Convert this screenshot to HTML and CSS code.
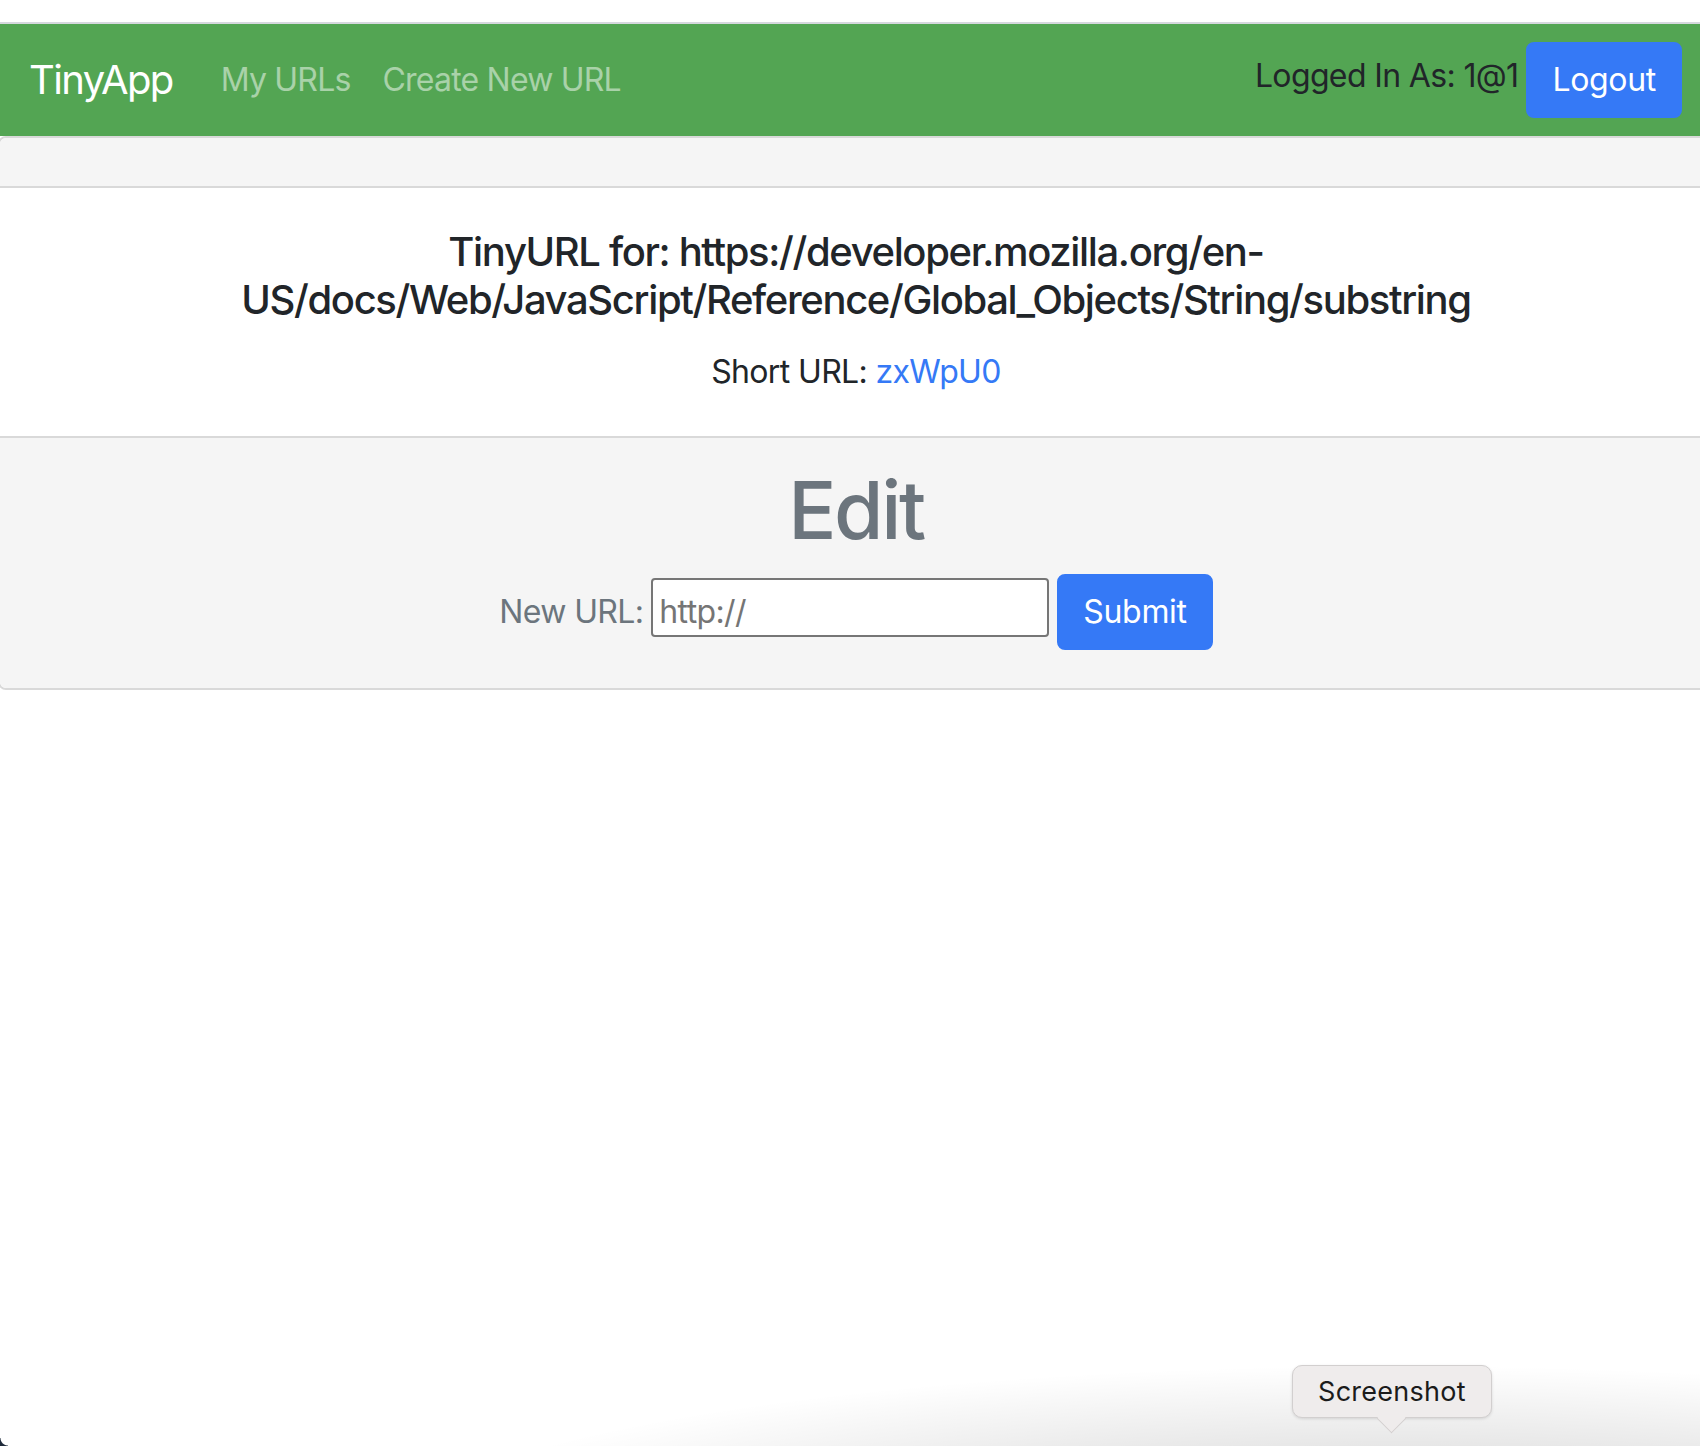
FILE: index.html
```html
<!DOCTYPE html>
<html lang="en">
<head>
<meta charset="utf-8">
<title>TinyApp</title>
<link rel="stylesheet" href="styles.css">
</head>
<body>
<div class="chrome"></div>
<div class="page">
  <nav class="navbar">
    <div class="nav-left">
      <a class="brand" href="#">TinyApp</a>
      <ul class="nav">
        <li><a class="nav-link" href="#">My URLs</a></li>
        <li><a class="nav-link" href="#">Create New URL</a></li>
      </ul>
    </div>
    <div class="nav-right">
      <span class="user">Logged In As: 1@1</span>
      <button class="btn" type="button">Logout</button>
    </div>
  </nav>
  <div class="card">
    <div class="card-header"></div>
    <div class="card-body">
      <h5 class="card-title">TinyURL for: https://developer.mozilla.org/en-US/docs/Web/JavaScript/Reference/Global_Objects/String/substring</h5>
      <p class="card-text">Short URL: <a class="short-link" href="#">zxWpU0</a></p>
    </div>
    <div class="card-footer">
      <h1 class="edit-title">Edit</h1>
      <form class="edit-form">
        <label class="edit-label" for="newurl">New URL:</label>
        <input class="edit-input" id="newurl" type="text" placeholder="http://">
        <button class="btn" type="button">Submit</button>
      </form>
    </div>
  </div>
</div>
<div class="dock-shadow"></div>
<div class="tooltip">Screenshot</div>
<div class="corner"></div>
</body>
</html>
```
FILE: styles.css
```css
html, body {
  margin: 0;
  padding: 0;
}
body {
  width: 1700px;
  height: 1446px;
  overflow: hidden;
  position: relative;
  background: #fff;
  font-family: Inter, "Noto Sans", sans-serif;
  font-size: 32px;
  line-height: 1.5;
  letter-spacing: -0.02em;
  color: #212529;
}
.chrome {
  height: 22px;
  background: #fff;
  border-bottom: 2px solid #d5d8dd;
}
.page {
  width: 1714px;
}
.navbar {
  height: 112px;
  box-sizing: border-box;
  padding: 0 32px 0 29px;
  background: #53a553;
  display: flex;
  align-items: center;
  justify-content: space-between;
}
.nav-left {
  display: flex;
  align-items: center;
}
.brand {
  color: #fff;
  text-decoration: none;
  font-size: 40px;
  letter-spacing: -0.04em;
  line-height: 60px;
  padding: 10px 0;
  margin-right: 32px;
}
.nav {
  display: flex;
  list-style: none;
  margin: 0;
  padding: 0;
}
.nav-link {
  display: block;
  padding: 16px;
  line-height: 48px;
  letter-spacing: -0.025em;
  color: rgba(255, 255, 255, 0.5);
  text-decoration: none;
}
.nav-right {
  display: flex;
  align-items: center;
}
.user {
  margin-right: 8px;
  margin-bottom: 8px;
  line-height: 48px;
}
.btn {
  font-family: inherit;
  font-size: 32px;
  line-height: 48px;
  letter-spacing: -0.01em;
  padding: 12px 24px;
  border: 2px solid #3579f6;
  border-radius: 8px;
  background: #3579f6;
  color: #fff;
  cursor: pointer;
}
.card {
  margin-left: -2px;
  border: 2px solid #d9d9d9;
  border-radius: 8px;
  background: #fff;
  text-align: center;
  overflow: hidden;
}
.card-header {
  height: 48px;
  background: #f5f5f5;
  border-bottom: 2px solid #d9d9d9;
}
.card-body {
  padding: 40px;
}
.card-title {
  margin: 0 0 24px;
  font-size: 40px;
  font-weight: 500;
  letter-spacing: -0.034em;
  line-height: 1.2;
}
.card-text {
  margin: 0;
}
.short-link {
  color: #3579f6;
  text-decoration: none;
}
.card-footer {
  background: #f5f5f5;
  border-top: 2px solid #d9d9d9;
  padding: 24px 40px;
  color: #6c757d;
}
.edit-title {
  margin: 0 0 16px;
  font-size: 80px;
  font-weight: 500;
  letter-spacing: -0.03em;
  line-height: 1.2;
}
.edit-form {
  margin: 0 0 14px;
  display: flex;
  justify-content: center;
  align-items: baseline;
}
.edit-label {
  margin-right: 8px;
}
.edit-input {
  box-sizing: border-box;
  width: 398px;
  height: 59px;
  padding: 8px 6px 0;
  margin-right: 8px;
  border: 2px solid #767676;
  border-radius: 4px;
  font-family: inherit;
  font-size: 32px;
  letter-spacing: -0.02em;
  color: #212529;
  background: #fff;
}
.edit-input::placeholder {
  color: #757575;
}
.dock-shadow {
  position: absolute;
  left: 0;
  right: 0;
  bottom: 0;
  height: 120px;
  background: radial-gradient(ellipse 1020px 175px at 1400px 214px, rgba(0, 0, 0, 0.16) 0%, rgba(0, 0, 0, 0.1) 50%, rgba(0, 0, 0, 0) 100%);
  pointer-events: none;
}
.tooltip {
  position: absolute;
  left: 1292px;
  top: 1365px;
  width: 200px;
  height: 53px;
  box-sizing: border-box;
  border: 1px solid #d2cfcf;
  border-radius: 10px;
  background: #efecec;
  box-shadow: 0 1px 3px rgba(0, 0, 0, 0.12);
  font-size: 27px;
  letter-spacing: 0.01em;
  line-height: 51px;
  text-align: center;
  color: #1b1b1b;
}
.tooltip::after {
  content: "";
  position: absolute;
  left: 88px;
  bottom: -12px;
  width: 20px;
  height: 20px;
  background: #efecec;
  border-right: 1px solid #d2cfcf;
  border-bottom: 1px solid #d2cfcf;
  transform: rotate(45deg);
}
.corner {
  position: absolute;
  left: 0;
  bottom: 0;
  width: 8px;
  height: 8px;
  background: radial-gradient(circle at 100% 0, rgba(30, 42, 58, 0) 7px, #1e2a3a 8px);
}
```
